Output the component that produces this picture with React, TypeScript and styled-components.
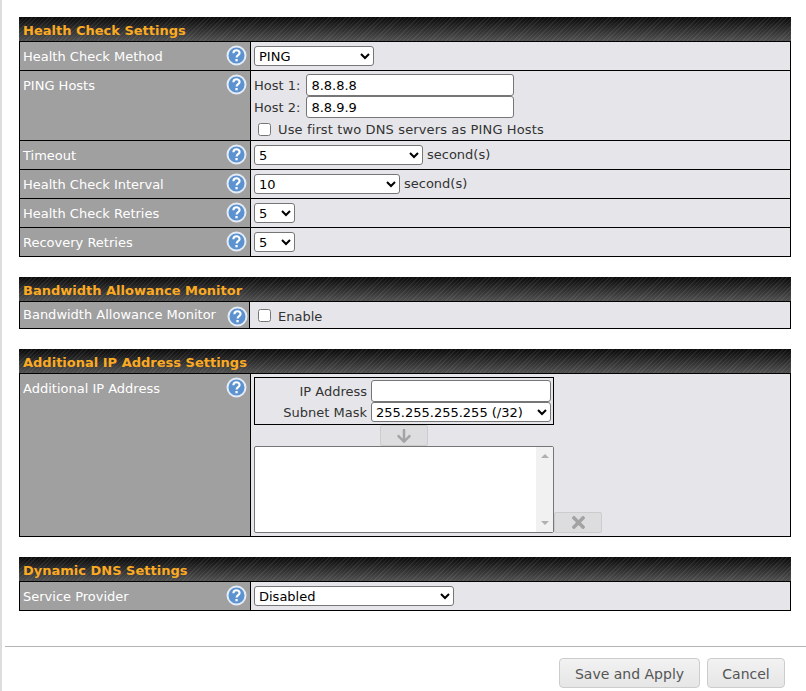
import React from 'react';
import styled, { createGlobalStyle } from 'styled-components';
import { FaArrowDown, FaTimes } from 'react-icons/fa';

const GlobalStyle = createGlobalStyle`
  html, body {
    margin: 0;
    padding: 0;
    background: #fff;
  }
  body {
    font-family: "DejaVu Sans", Verdana, sans-serif;
    font-size: 13px;
    color: #333;
    overflow: hidden;
  }
`;

const Page = styled.div`
  box-sizing: border-box;
  width: 806px;
  height: 691px;
  border-left: 2px solid #ddd;
  padding: 17px 0 0 3px;
  overflow: hidden;
`;

const Sections = styled.div`
  display: flex;
  flex-direction: column;
  gap: 20px;
  margin-left: 14px;
  width: 772px;
`;

const Section = styled.section`
  border: 1px solid #000;
  border-top: 0;
`;

const SectionTitle = styled.h2`
  box-sizing: border-box;
  height: 25px;
  margin: 0 -1px;
  padding: 6px 0 0 4px;
  border-bottom: 1px solid #000;
  font-size: 13px;
  line-height: 15px;
  font-weight: bold;
  color: #fbaa22;
  background:
    repeating-linear-gradient(135deg, rgba(255, 255, 255, 0.07) 0 1px, transparent 1px 3px),
    linear-gradient(#0a0a0a, #505050);
`;

const Row = styled.div<{ $height: number; $labelWidth?: number }>`
  display: grid;
  grid-template-columns: ${p => p.$labelWidth ?? 231}px 1fr;
  height: ${p => p.$height}px;
  & + & {
    border-top: 1px solid #000;
  }
`;

const LabelCell = styled.div<{ $tight?: boolean }>`
  display: flex;
  justify-content: space-between;
  align-items: flex-start;
  padding: ${p => (p.$tight ? '4px 1px' : '6px 3px')} 0 3px;
  background: #a0a0a0;
  color: #fff;
  border-right: 1px solid #000;
  line-height: 18px;
`;

const ValueCell = styled.div<{ $top?: number; $left?: number }>`
  display: flex;
  flex-direction: column;
  align-items: flex-start;
  padding: ${p => p.$top ?? 4}px 3px 0 ${p => p.$left ?? 3}px;
  background: #e6e6ea;
  min-width: 0;
`;

const Line = styled.div`
  display: flex;
  align-items: center;
  gap: 4px;
  line-height: 18px;
`;

const HostLine = styled(Line)`
  gap: 6px;
`;

const Caption = styled.span<{ $drop?: number }>`
  margin-top: ${p => p.$drop ?? 2}px;
`;

const WideCaption = styled(Caption)`
  letter-spacing: 0.13px;
`;

const HelpIcon = styled.svg<{ $tight?: boolean }>`
  flex: none;
  width: 21px;
  height: 21px;
  margin-top: ${p => (p.$tight ? '0' : '-3px')};
`;

const Help: React.FC<{ tight?: boolean }> = ({ tight }) => (
  <HelpIcon viewBox="0 0 21 21" $tight={tight}>
    <circle cx="10.5" cy="10.5" r="9" fill="#5b92cf" stroke="#e4ecf6" strokeWidth="2" />
    <path d="M7.4 8.2c0-1.9 1.4-2.9 3.1-2.9 1.8 0 3.1 1 3.1 2.6 0 2.2-3 2.2-3 4.6" fill="none" stroke="#fff" strokeWidth="2.1" />
    <rect x="9.4" y="14" width="2.3" height="2.3" fill="#fff" />
  </HelpIcon>
);

const Select = styled.select<{ $width: number }>`
  box-sizing: border-box;
  width: ${p => p.$width}px;
  height: 20px;
  padding: 0;
  background: #fff;
  border: 1px solid #767676;
  border-radius: 3px;
  font-family: inherit;
  font-size: 13px;
  color: #000;
`;

const TextInput = styled.input<{ $width: number }>`
  box-sizing: border-box;
  width: ${p => p.$width}px;
  height: 22px;
  padding: 1px 4px;
  background: #fff;
  border: 1px solid #767676;
  border-radius: 3px;
  font-family: inherit;
  font-size: 13px;
  color: #000;
`;

const Check = styled.input`
  width: 13px;
  height: 13px;
  margin: 0 0 0 4px;
`;

const EnableCheck = styled(Check)`
  margin-top: 2px;
`;

const CheckLine = styled(Line)`
  gap: 7px;
  margin-top: 1px;
`;

const EnableLine = styled(CheckLine)`
  align-items: flex-start;
`;

const IpBox = styled.div`
  box-sizing: border-box;
  display: grid;
  grid-template-columns: 112px 180px;
  grid-template-rows: 22px 20px;
  align-items: center;
  column-gap: 4px;
  width: 300px;
  height: 48px;
  padding: 2px 0 0;
  border: 1px solid #000;
`;

const IpLabel = styled.span`
  text-align: right;
`;

const IconButton = styled.button`
  display: flex;
  align-items: center;
  justify-content: center;
  box-sizing: border-box;
  width: 48px;
  height: 21px;
  padding: 0;
  background: #dddddf;
  border: 1px solid #ccc;
  border-radius: 2px;
  color: #a3a3a3;
`;

const ArrowButton = styled(IconButton)`
  margin-left: 126px;
  font-size: 16px;
`;

const ClearButton = styled(IconButton)`
  font-size: 19px;
`;

const ListRow = styled.div`
  display: flex;
  align-items: flex-end;
`;

const ListBox = styled.div`
  box-sizing: border-box;
  display: flex;
  justify-content: flex-end;
  width: 300px;
  height: 87px;
  background: #fff;
  border: 1px solid #767676;
  border-radius: 2px;
`;

const ScrollTrack = styled.div`
  display: flex;
  flex-direction: column;
  justify-content: space-between;
  align-items: center;
  width: 17px;
  padding: 7px 0;
  box-sizing: border-box;
  background: #f1f1f1;
`;

const ScrollArrow = styled.span<{ $down?: boolean }>`
  width: 0;
  height: 0;
  border-left: 4px solid transparent;
  border-right: 4px solid transparent;
  border-bottom: ${p => (p.$down ? '0' : '4px solid #b0b0b0')};
  border-top: ${p => (p.$down ? '4px solid #b0b0b0' : '0')};
`;

const Rule = styled.hr`
  height: 1px;
  margin: 35px 0 0 0;
  border: 0;
  background: #b4b4b4;
  width: 801px;
`;

const Footer = styled.div`
  display: flex;
  justify-content: flex-end;
  gap: 7px;
  margin-top: 11px;
  width: 780px;
`;

const FooterButton = styled.button<{ $width: number }>`
  box-sizing: border-box;
  width: ${p => p.$width}px;
  height: 30px;
  padding: 1px 0 0;
  border: 1px solid #ccc;
  border-radius: 4px;
  background: linear-gradient(#f2f2f2, #e6e6e6);
  color: #555;
  font-family: inherit;
  font-size: 14px;
`;

const App: React.FC = () => (
  <>
    <GlobalStyle />
    <Page>
      <Sections>
        <Section>
          <SectionTitle>Health Check Settings</SectionTitle>
          <Row $height={28}>
            <LabelCell>Health Check Method<Help /></LabelCell>
            <ValueCell><Select $width={120}><option>PING</option></Select></ValueCell>
          </Row>
          <Row $height={69}>
            <LabelCell>PING Hosts<Help /></LabelCell>
            <ValueCell $top={3}>
              <HostLine><Caption>Host 1:</Caption><TextInput $width={208} defaultValue="8.8.8.8" /></HostLine>
              <HostLine><Caption>Host 2:</Caption><TextInput $width={208} defaultValue="8.8.9.9" /></HostLine>
              <CheckLine><Check type="checkbox" /><WideCaption>Use first two DNS servers as PING Hosts</WideCaption></CheckLine>
            </ValueCell>
          </Row>
          <Row $height={28}>
            <LabelCell>Timeout<Help /></LabelCell>
            <ValueCell><Line><Select $width={169}><option>5</option></Select>second(s)</Line></ValueCell>
          </Row>
          <Row $height={28}>
            <LabelCell>Health Check Interval<Help /></LabelCell>
            <ValueCell><Line><Select $width={146}><option>10</option></Select>second(s)</Line></ValueCell>
          </Row>
          <Row $height={28}>
            <LabelCell>Health Check Retries<Help /></LabelCell>
            <ValueCell><Select $width={41}><option>5</option></Select></ValueCell>
          </Row>
          <Row $height={28}>
            <LabelCell>Recovery Retries<Help /></LabelCell>
            <ValueCell><Select $width={41}><option>5</option></Select></ValueCell>
          </Row>
        </Section>

        <Section>
          <SectionTitle>Bandwidth Allowance Monitor</SectionTitle>
          <Row $height={26} $labelWidth={230}>
            <LabelCell $tight>Bandwidth Allowance Monitor<Help tight /></LabelCell>
            <ValueCell $left={4}><EnableLine><EnableCheck type="checkbox" /><Caption $drop={1}>Enable</Caption></EnableLine></ValueCell>
          </Row>
        </Section>

        <Section>
          <SectionTitle>Additional IP Address Settings</SectionTitle>
          <Row $height={162}>
            <LabelCell>Additional IP Address<Help /></LabelCell>
            <ValueCell $top={3}>
              <IpBox>
                <IpLabel>IP Address</IpLabel>
                <TextInput $width={180} />
                <IpLabel>Subnet Mask</IpLabel>
                <Select $width={180}><option>255.255.255.255 (/32)</option></Select>
              </IpBox>
              <ArrowButton disabled><FaArrowDown /></ArrowButton>
              <ListRow>
                <ListBox>
                  <ScrollTrack><ScrollArrow /><ScrollArrow $down /></ScrollTrack>
                </ListBox>
                <ClearButton disabled><FaTimes /></ClearButton>
              </ListRow>
            </ValueCell>
          </Row>
        </Section>

        <Section>
          <SectionTitle>Dynamic DNS Settings</SectionTitle>
          <Row $height={28}>
            <LabelCell>Service Provider<Help /></LabelCell>
            <ValueCell><Select $width={200}><option>Disabled</option></Select></ValueCell>
          </Row>
        </Section>
      </Sections>

      <Rule />
      <Footer>
        <FooterButton $width={141}>Save and Apply</FooterButton>
        <FooterButton $width={78}>Cancel</FooterButton>
      </Footer>
    </Page>
  </>
);

export default App;
